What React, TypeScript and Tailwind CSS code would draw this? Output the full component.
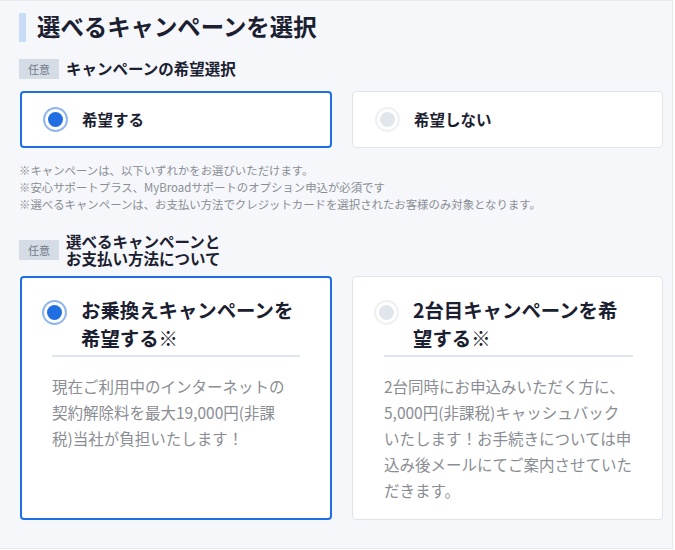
import React, { useState } from "react";

type Option = {
  id: string;
  label: string;
};

type Campaign = {
  id: string;
  title: string;
  body: string;
};

const wishOptions: Option[] = [
  { id: "yes", label: "希望する" },
  { id: "no", label: "希望しない" },
];

const campaigns: Campaign[] = [
  {
    id: "switch",
    title: "お乗換えキャンペーンを希望する※",
    body: "現在ご利用中のインターネットの契約解除料を最大19,000円(非課税)当社が負担いたします！",
  },
  {
    id: "second",
    title: "2台目キャンペーンを希望する※",
    body: "2台同時にお申込みいただく方に、5,000円(非課税)キャッシュバックいたします！お手続きについては申込み後メールにてご案内させていただきます。",
  },
];

function Radio({ checked }: { checked: boolean }) {
  return checked ? (
    <span className="flex h-[25px] w-[25px] shrink-0 items-center justify-center rounded-full border-2 border-[#8fb6ee] bg-white">
      <span className="h-[15px] w-[15px] rounded-full bg-[#1f6fe3]" />
    </span>
  ) : (
    <span className="flex h-[25px] w-[25px] shrink-0 items-center justify-center rounded-full border-2 border-[#eef0f4] bg-white">
      <span className="h-[15px] w-[15px] rounded-full bg-[#e1e5ec]" />
    </span>
  );
}

function Badge() {
  return (
    <span className="flex h-[20px] w-[40px] shrink-0 items-center justify-center bg-[#d5dce5] text-[11px] text-[#717b88]">
      任意
    </span>
  );
}

export default function App() {
  const [wish, setWish] = useState("yes");
  const [campaign, setCampaign] = useState("switch");

  return (
    <div
      className="h-[549px] w-[673px] border-t border-r border-b border-[#e6e9ee] bg-[#f5f7fb] pt-[11px] pr-[9px] pl-[19px] text-[#1b2030]"
      style={{ fontFamily: '"Noto Sans CJK JP", "Noto Sans", sans-serif' }}
    >
      {/* heading */}
      <div className="flex h-[30px] items-center gap-[11px]">
        <span className="h-[29px] w-[7px] bg-[#c9dcf5]" />
        <h1 className="text-[23.4px] leading-none font-bold">選べるキャンペーンを選択</h1>
      </div>

      {/* wish select */}
      <div className="mt-[17px] flex items-center gap-[7px]">
        <Badge />
        <span className="text-[15.5px] leading-none font-bold">キャンペーンの希望選択</span>
      </div>

      <div className="mt-[12px] grid grid-cols-[312px_311px] gap-[20px] pl-px">
        {wishOptions.map((opt) => {
          const active = wish === opt.id;
          return (
            <button
              key={opt.id}
              onClick={() => setWish(opt.id)}
              className={
                active
                  ? "flex h-[57px] items-center gap-[14px] rounded-[4px] border-2 border-[#1f6fe3] bg-white pl-[21px] text-left"
                  : "flex h-[57px] items-center gap-[14px] rounded-[4px] border border-[#dfe4eb] bg-white pl-[22px] text-left"
              }
            >
              <Radio checked={active} />
              <span className="text-[15.5px] font-bold">{opt.label}</span>
            </button>
          );
        })}
      </div>

      {/* notes */}
      <div className="mt-[14px] text-[11.4px] leading-[17px] text-[#8a8d93]">
        <p>※キャンペーンは、以下いずれかをお選びいただけます。</p>
        <p>※安心サポートプラス、MyBroadサポートのオプション申込が必須です</p>
        <p>※選べるキャンペーンは、お支払い方法でクレジットカードを選択されたお客様のみ対象となります。</p>
      </div>

      {/* campaign select */}
      <div className="mt-[20px] flex items-center gap-[7px]">
        <Badge />
        <span className="text-[15.5px] leading-[17px] font-bold">
          選べるキャンペーンと
          <br />
          お支払い方法について
        </span>
      </div>

      <div className="mt-[9px] grid grid-cols-[312px_311px] gap-[20px] pl-px">
        {campaigns.map((c) => {
          const active = campaign === c.id;
          return (
            <button
              key={c.id}
              onClick={() => setCampaign(c.id)}
              className={
                active
                  ? "flex h-[244px] flex-col rounded-[4px] border-2 border-[#1f6fe3] bg-white pt-[18px] pr-[30px] pl-[20px] text-left"
                  : "flex h-[244px] flex-col rounded-[4px] border border-[#dfe4eb] bg-white pt-[19px] pr-[29px] pl-[21px] text-left"
              }
            >
              <div className="flex items-start gap-[14px]">
                <span className="mt-[4px]">
                  <Radio checked={active} />
                </span>
                <span className="text-[19.4px] leading-[28px] font-bold">{c.title}</span>
              </div>
              <div className="mt-[3px] ml-[10px] border-t-2 border-[#e0e6ee] pt-[16px]">
                <p
                  className={
                    c.id === "switch"
                      ? "pr-[11px] text-[15.5px] leading-[26px] text-[#8a8d93]"
                      : "text-[15.5px] leading-[26px] text-[#8a8d93]"
                  }
                >
                  {c.body}
                </p>
              </div>
            </button>
          );
        })}
      </div>
    </div>
  );
}
